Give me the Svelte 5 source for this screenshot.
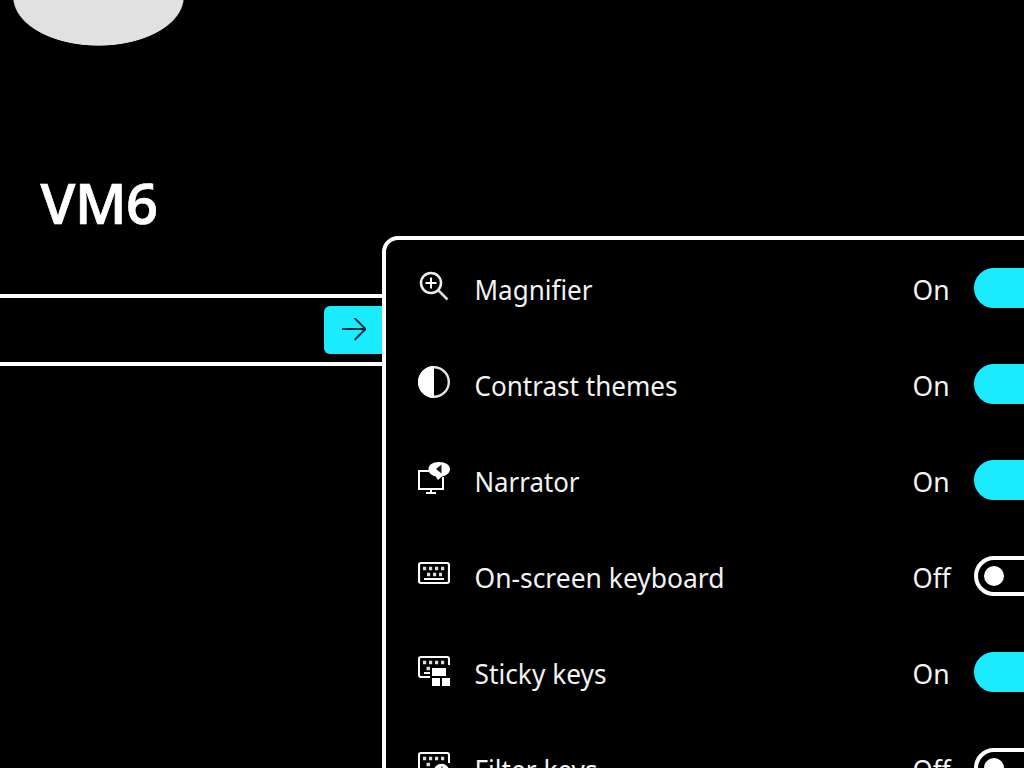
<script>
  const options = [
    { label: 'Magnifier', icon: 'magnifier', on: true, width: 118 },
    { label: 'Contrast themes', icon: 'contrast', on: true, width: 203 },
    { label: 'Narrator', icon: 'narrator', on: true, width: 105 },
    { label: 'On-screen keyboard', icon: 'keyboard', on: false, width: 250 },
    { label: 'Sticky keys', icon: 'sticky', on: true, width: 132 },
    { label: 'Filter keys', icon: 'filter', on: false, width: 123 }
  ];
</script>

<main>
  <section class="account">
    <div class="avatar"></div>
    <h1>VM6</h1>
    <div class="password">
      <button class="submit" aria-label="Submit">
        <svg width="24" height="24" viewBox="0 0 24 24" fill="none" stroke="#06343b" stroke-width="2">
          <path d="M0 11H23M12.5 0L23.5 11L12.5 22" />
        </svg>
      </button>
    </div>
  </section>

  <section class="flyout">
    {#each options as item}
      <div class="row">
        <svg class="icon" width="32" height="32" viewBox="0 0 32 32" fill="none" stroke="#fff" stroke-width="2">
          {#if item.icon === 'magnifier'}
            <circle cx="13" cy="13" r="10" stroke="#eee" stroke-width="2.5" />
            <path d="M20 20L29.5 29.5" stroke="#ddd" stroke-width="2.5" />
            <path d="M13 7.5V18.5M7.5 13H18.5" />
          {:else if item.icon === 'contrast'}
            <circle cx="16" cy="16" r="14.8" stroke="#e5e5e5" stroke-width="2.4" />
            <path d="M16 0A16 16 0 0 0 16 32Z" fill="#fff" stroke="none" />
          {:else if item.icon === 'narrator'}
            <path d="M12 9H1V27H25V15M13 27V31M8 31H18" />
            <path d="M21 0C14.5 0 10.5 3 10.5 7C10.5 10.5 13 13.5 17.5 14.3L20 18L24 14.5C29 13.5 32 10.5 32 7C32 3 27.5 0 21 0Z" fill="#fff" stroke="none" />
            <path d="M23.5 2.5L18 7L23.5 11.5Z" fill="#171717" stroke="none" />
          {:else if item.icon === 'keyboard'}
            <rect x="1" y="5" width="30" height="20" rx="2" stroke-width="2.2" />
            <path d="M5 10.5H27" stroke="#ddd" stroke-width="3.4" stroke-dasharray="3.2 2.8" />
            <path d="M9 16.5H24" stroke="#ddd" stroke-width="3.4" stroke-dasharray="3.2 2.8" />
            <path d="M6 21H26" />
          {:else if item.icon === 'sticky'}
            <path d="M31 11V5Q31 3 29 3H3Q1 3 1 5V21Q1 23 3 23H12" />
            <path d="M5 8.5H27" stroke="#ddd" stroke-width="3.4" stroke-dasharray="3.2 2.8" />
            <path d="M8.5 14.5H12" stroke="#ddd" stroke-width="3.4" />
            <path d="M6 19H12" />
            <path d="M14 14H28V22H14ZM14 24H22V32H14ZM24 24H32V32H24Z" fill="#fff" stroke="none" />
          {:else}
            <path d="M31 13V5Q31 3 29 3H3Q1 3 1 5V21Q1 23 3 23H14" />
            <path d="M5 8.5H27" stroke="#ddd" stroke-width="3.4" stroke-dasharray="3.2 2.8" />
            <path d="M8.5 14.5H12" stroke="#ddd" stroke-width="3.4" />
            <circle cx="23.5" cy="21.5" r="7.8" fill="#fff" stroke="none" />
            <path d="M24 16.5V18.5" stroke="#777" />
          {/if}
        </svg>
        <svg class="label" width="420" height="40">
          <text x="0.5" y="32.3" textLength={item.width} lengthAdjust="spacingAndGlyphs">{item.label}</text>
        </svg>
        <svg class="state" width="40" height="40">
          <text x="0.5" y="32.3" textLength={item.on ? 37 : 38} lengthAdjust="spacingAndGlyphs">{item.on ? 'On' : 'Off'}</text>
        </svg>
        <div class="toggle" class:on={item.on}><i></i></div>
      </div>
    {/each}
  </section>
</main>

<style>
  :global(body) {
    background: #000;
    overflow: hidden;
  }

  main {
    position: relative;
    width: 1024px;
    height: 768px;
    overflow: hidden;
    background: #000;
    color: #fff;
    font-family: "Noto Sans", "Open Sans", sans-serif;
  }

  .account {
    width: 444px;
  }

  .avatar {
    width: 171px;
    height: 46px;
    margin-left: 13px;
    overflow: hidden;
    background: radial-gradient(ellipse 85.8px 49px at 85.5px -3px, #e1e1e1 98.5%, transparent 100%);
  }

  h1 {
    margin: 118px 0 0 40.5px;
    height: 72px;
    font: 600 56px/76px "Open Sans", sans-serif;
    letter-spacing: -0.5px;
    -webkit-text-stroke: 0.7px #fff;
  }

  .password {
    box-sizing: border-box;
    display: flex;
    justify-content: flex-end;
    align-items: center;
    height: 72px;
    margin-top: 58px;
    padding-right: 56px;
    border-top: 4px solid #fff;
    border-bottom: 4px solid #fff;
  }

  .submit {
    display: flex;
    align-items: center;
    justify-content: center;
    width: 64px;
    height: 48px;
    padding: 0 4px 0 0;
    border: 0;
    border-radius: 6px;
    background: #1aebff;
  }

  .flyout {
    position: absolute;
    left: 382px;
    top: 236px;
    box-sizing: border-box;
    width: 760px;
    height: 800px;
    padding-left: 32px;
    border: 4px solid #fff;
    border-radius: 16px;
    background: #000;
  }

  .row {
    display: flex;
    align-items: center;
    height: 96px;
  }

  .icon {
    flex: none;
    margin: -4px 24px 0 0;
  }

  .label {
    flex: none;
    width: 420px;
    margin-right: 18px;
    overflow: visible;
  }

  .state {
    flex: none;
    margin-right: 22px;
    overflow: visible;
  }

  text {
    fill: #f2f2f2;
    font-size: 27px;
  }

  .toggle {
    box-sizing: border-box;
    flex: none;
    width: 80px;
    height: 40px;
    padding: 6px;
    border: 4px solid #fff;
    border-radius: 20px;
  }

  .toggle i {
    display: block;
    width: 20px;
    height: 20px;
    border-radius: 50%;
    background: #fff;
  }

  .toggle.on {
    display: flex;
    justify-content: flex-end;
    border-color: #1aebff;
    background: #1aebff;
  }

  .toggle.on i {
    background: #000;
  }
</style>
